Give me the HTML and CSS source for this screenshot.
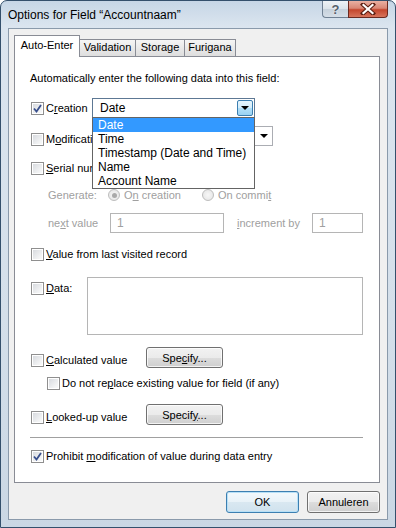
FILE: index.html
```html
<!DOCTYPE html>
<html lang="en">
<head>
  <meta charset="UTF-8" />
  <title>Options for Field</title>
  <link rel="stylesheet" href="styles.css">
</head>
<body>
  <div class="window">
    <div class="titlebar">
      <div class="title">Options for Field “Accountnaam”</div>
      <div class="caption">
        <div class="cap-help">?</div>
        <div class="cap-close">
          <svg width="16" height="12" viewBox="0 0 16 12">
            <path d="M3 1.5 L13 10.5 M13 1.5 L3 10.5" stroke="#5b1e12" stroke-width="4.2" stroke-linecap="square" />
            <path d="M3.5 2 L12.5 10 M12.5 2 L3.5 10" stroke="#fff" stroke-width="2.2" stroke-linecap="square" />
          </svg>
        </div>
      </div>
    </div>

    <div class="client">
      <div class="tabs">
        <div class="tab tab-active tab-auto">Auto-Enter</div>
        <div class="tab tab-valid">Validation</div>
        <div class="tab tab-storage">Storage</div>
        <div class="tab tab-furi">Furigana</div>
      </div>

      <div class="panel">
        <div class="intro">Automatically enter the following data into this field:</div>

        <div class="row row-creation">
          <label class="check check-creation"><span class="box checked"></span><span>C<u>r</u>eation</span></label>
          <div class="combo combo-active">
            <span class="combo-text">Date</span>
            <span class="combo-btn hot"><span class="arrow"></span></span>
            <div class="droplist">
              <div class="item selected">Date</div>
              <div class="item">Time</div>
              <div class="item">Timestamp (Date and Time)</div>
              <div class="item">Name</div>
              <div class="item">Account Name</div>
            </div>
          </div>
        </div>

        <div class="row row-mod">
          <label class="check check-mod"><span class="box"></span><span>M<u>o</u>dification</span></label>
          <div class="combo combo-mod">
            <span class="combo-text"></span>
            <span class="combo-btn"><span class="arrow"></span></span>
          </div>
        </div>

        <div class="row row-serial">
          <label class="check"><span class="box"></span><span><u>S</u>erial number</span></label>
        </div>

        <div class="row row-generate disabled">
          <span class="gen-label">Generate:</span>
          <span class="radio-opt opt-first"><span class="radio on"></span><span>O<u>n</u> creation</span></span>
          <span class="radio-opt"><span class="radio"></span><span>On commi<u>t</u></span></span>
        </div>

        <div class="row row-next disabled">
          <span class="next-label">ne<u>x</u>t value</span>
          <span class="field field-next">1</span>
          <span class="inc-label"><u>i</u>ncrement by</span>
          <span class="field field-inc">1</span>
        </div>

        <div class="row row-last">
          <label class="check"><span class="box"></span><span><u>V</u>alue from last visited record</span></label>
        </div>

        <div class="row row-data">
          <label class="check check-data"><span class="box"></span><span><u>D</u>ata:</span></label>
          <div class="textarea"></div>
        </div>

        <div class="row row-calc">
          <label class="check check-calc"><span class="box"></span><span><u>C</u>alculated value</span></label>
          <button class="btn btn-specify">Spe<u>c</u>ify...</button>
        </div>

        <div class="row row-replace">
          <label class="check"><span class="box"></span><span>Do not re<u>p</u>lace existing value for field (if any)</span></label>
        </div>

        <div class="row row-lookup">
          <label class="check check-calc"><span class="box"></span><span><u>L</u>ooked-up value</span></label>
          <button class="btn btn-specify">Specif<u>y</u>...</button>
        </div>

        <div class="separator"></div>

        <div class="row row-prohibit">
          <label class="check"><span class="box checked"></span><span>Prohibit <u>m</u>odification of value during data entry</span></label>
        </div>
      </div>

      <div class="footer">
        <button class="btn btn-ok">OK</button>
        <button class="btn btn-cancel">Annuleren</button>
      </div>
    </div>
  </div>
</body>
</html>
```

FILE: styles.css
```css
body {
  margin: 0;
  font-family: 'Liberation Sans', Arial, sans-serif;
  font-size: 11px;
  color: #000;
  background: #fff;
}

.window {
  width: 396px;
  height: 528px;
  box-sizing: border-box;
  border: 1px solid #34506c;
  border-radius: 7px 7px 0 0;
  padding: 0 7px 7px;
  background: linear-gradient(180deg, #c6d6e6 0, #dbe5ef 26px, #d4dfea 60%, #cad7e4 100%);
  display: flex;
  flex-direction: column;
}

/* title bar */
.titlebar {
  height: 27px;
  display: flex;
  justify-content: space-between;
  align-items: flex-start;
}

.title {
  font-size: 12px;
  margin-top: 7px;
  line-height: 14px;
}

.caption {
  display: flex;
}

.cap-help,
.cap-close {
  height: 17px;
  box-sizing: border-box;
  border: 1px solid #6f8093;
  border-top: none;
  display: flex;
  align-items: center;
  justify-content: center;
}

.cap-help {
  width: 26px;
  border-radius: 0 0 0 4px;
  border-right: none;
  background: linear-gradient(180deg, #eef2f6 0, #dbe3ea 50%, #c6d1dc 51%, #d5dee7 100%);
  color: #54606c;
  font-size: 13px;
  font-weight: bold;
  text-shadow: 0 0 2px #fff;
}

.cap-close {
  width: 40px;
  border-color: #6b2a20;
  border-radius: 0 0 4px 0;
  background: linear-gradient(180deg, #eab0a2 0, #d98775 45%, #c4462d 55%, #d7745c 100%);
}

/* client area */
.client {
  flex: 1;
  background: #f0f0f0;
  border: 1px solid #8a9aab;
  display: flex;
  flex-direction: column;
}

.tabs {
  height: 27px;
  display: flex;
  align-items: flex-end;
  padding-left: 5px;
}

.tab {
  height: 17px;
  box-sizing: border-box;
  border: 1px solid #898c95;
  border-bottom: none;
  background: linear-gradient(180deg, #f5f5f5 0, #e9e9e9 50%, #dedede 100%);
  text-align: center;
  line-height: 15px;
  margin-left: -1px;
}

.tab-active {
  height: 22px;
  margin-left: 0;
  margin-bottom: -1px;
  background: #fff;
  line-height: 18px;
  position: relative;
  z-index: 2;
}

.tab-auto { width: 66px; }
.tab-valid { width: 57px; }
.tab-storage { width: 50px; }
.tab-furi { width: 52px; }

.panel {
  height: 427px;
  box-sizing: border-box;
  margin: 0 7px 0 5px;
  border: 1px solid #898c95;
  background: #fff;
  padding: 13px 0 0 16px;
}

.intro {
  height: 16px;
  line-height: 16px;
  margin-left: -1px;
}

.row {
  display: flex;
  align-items: center;
  height: 16px;
}

.disabled {
  color: #a0a0a0;
}

/* checkboxes */
.check {
  display: flex;
  align-items: center;
  height: 16px;
  line-height: 16px;
  white-space: nowrap;
}

.box {
  width: 13px;
  height: 13px;
  box-sizing: border-box;
  border: 1px solid #8f8f8f;
  background: linear-gradient(135deg, #d4d7dc 0, #f2f3f4 70%, #fbfbfb 100%);
  box-shadow: inset 0 0 0 1px #fff;
  margin-right: 2px;
  flex: none;
}

.box.checked {
  background-image: url("data:image/svg+xml;utf8,<svg xmlns='http://www.w3.org/2000/svg' width='9' height='9'><path d='M1 4.5 L3.5 7.5 L8 1' fill='none' stroke='%23384f8c' stroke-width='1.8'/></svg>"), linear-gradient(135deg, #d4d7dc 0, #f2f3f4 70%, #fbfbfb 100%);
  background-size: 9px 9px, auto;
  background-position: center, 0 0;
  background-repeat: no-repeat;
}

/* combos */
.row-creation {
  height: 20px;
  margin-top: 12px;
}

.check-creation { width: 61px; }

.combo {
  height: 20px;
  box-sizing: border-box;
  border: 1px solid #abadb3;
  background: #fff;
  position: relative;
  display: flex;
  justify-content: space-between;
}

.combo-active {
  width: 163px;
  border-color: #5d7894;
  z-index: 3;
}

.combo-text {
  padding-left: 7px;
  line-height: 18px;
  font-size: 12px;
}

.combo-btn {
  width: 16px;
  display: flex;
  align-items: center;
  justify-content: center;
}

.combo-btn.hot {
  margin: 1px 1px 1px 0;
  border: 1px solid #3c7fb1;
  border-radius: 2px;
  background: linear-gradient(180deg, #e6f5fd 0, #d3edfb 50%, #b2dff8 51%, #99d2f3 100%);
  width: 14px;
}

.arrow {
  width: 0;
  height: 0;
  border-left: 4px solid transparent;
  border-right: 4px solid transparent;
  border-top: 4px solid #000;
}

.droplist {
  position: absolute;
  top: 18px;
  left: -1px;
  width: 163px;
  height: 72px;
  box-sizing: border-box;
  border: 1px solid #646464;
  background: #fff;
  font-size: 12px;
}

.item {
  height: 14px;
  line-height: 14px;
  padding-left: 5px;
  white-space: nowrap;
}

.item.selected {
  background: #3399ff;
  color: #fff;
}

.row-mod {
  height: 20px;
  margin-top: 11px;
}

.check-mod { width: 61px; }

.combo-mod {
  width: 181px;
  margin-top: -6px;
}

.row-serial { margin-top: 11px; }

/* serial number */
.row-generate {
  margin-top: 11px;
  padding-left: 17px;
}

.gen-label { width: 60px; }

.radio-opt {
  display: flex;
  align-items: center;
}

.opt-first { width: 94px; }

.radio {
  width: 12px;
  height: 12px;
  box-sizing: border-box;
  border-radius: 50%;
  border: 1px solid #bdbdbd;
  background: radial-gradient(circle, #f7f7f7 0, #e3e3e3 100%);
  margin-right: 4px;
  display: flex;
  align-items: center;
  justify-content: center;
}

.radio.on::after {
  content: "";
  width: 5px;
  height: 5px;
  border-radius: 50%;
  background: #a9a9a9;
}

.row-next {
  height: 20px;
  margin-top: 10px;
  padding-left: 17px;
}

.next-label { width: 62px; }

.field {
  height: 20px;
  box-sizing: border-box;
  border: 1px solid #b5b5b5;
  line-height: 18px;
  padding-left: 6px;
  font-size: 12px;
}

.field-next { width: 114px; }

.inc-label {
  width: 75px;
  margin-left: 13px;
}

.field-inc { width: 51px; }

.row-last { margin-top: 13px; }

/* data */
.row-data {
  height: 58px;
  margin-top: 15px;
  align-items: flex-start;
}

.check-data {
  width: 56px;
  margin-top: 3px;
}

.textarea {
  width: 276px;
  height: 58px;
  box-sizing: border-box;
  border: 1px solid #b5b5b5;
}

/* calculated / looked-up */
.row-calc,
.row-lookup {
  height: 21px;
  align-items: flex-start;
  margin-top: 12px;
}

.row-lookup { margin-top: 13px; }

.check-calc {
  width: 115px;
  margin-top: 5px;
}

.row-replace {
  margin-top: 7px;
  padding-left: 16px;
}

.separator {
  width: 333px;
  height: 1px;
  margin: 12px 0 0 -1px;
  background: #a0a0a0;
}

.row-prohibit { margin-top: 10px; }

/* buttons */
.btn {
  font-family: inherit;
  font-size: 11px;
  color: #000;
  padding: 0;
  border: 1px solid #707070;
  border-radius: 3px;
  background: linear-gradient(180deg, #f2f2f2 0, #ebebeb 50%, #dddddd 51%, #cfcfcf 100%);
  box-shadow: inset 0 0 0 1px rgba(255, 255, 255, 0.75);
}

.btn-specify {
  width: 77px;
  height: 21px;
}

.footer {
  display: flex;
  justify-content: flex-end;
  gap: 8px;
  padding: 8px 7px 0 0;
}

.btn-ok,
.btn-cancel {
  width: 73px;
  height: 22px;
}

.btn-ok {
  border-color: #3c7fb1;
  background: linear-gradient(180deg, #f3f9fc 0, #e8f2f8 50%, #d9e8f1 51%, #d0e2ee 100%);
  box-shadow: inset 0 0 0 1px #b7e0f7;
}
```
